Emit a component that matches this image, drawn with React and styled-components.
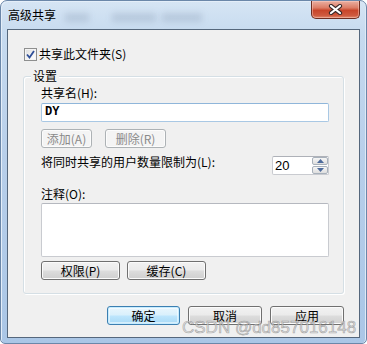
import styled, { createGlobalStyle } from "styled-components";

const Global = createGlobalStyle`
  html, body { margin: 0; padding: 0; background: #fff; }
  body {
    font-family: "Noto Sans CJK SC", "Noto Sans", sans-serif;
    font-size: 12px;
    color: #000;
  }
`;

const ui = `"Noto Sans CJK SC", "Noto Sans", sans-serif`;

const Window = styled.div`
  position: relative;
  width: 367px;
  height: 344px;
  box-sizing: border-box;
  display: flex;
  flex-direction: column;
  padding: 0 6px 5px 6px;
  border: 1px solid #6b87a9;
  border-radius: 7px 7px 5px 5px;
  background: linear-gradient(180deg, #d6e5f4 0%, #c6daef 10%, #b8cfea 45%, #aac6e6 100%);
  box-shadow: inset 1px 1px 0 #e4eef9, inset -1px 0 0 #dfeaf6;
  overflow: hidden;
`;

const TitleBar = styled.div`
  position: relative;
  height: 28px;
  display: flex;
  align-items: flex-start;
  margin: 0 -2px 0 0;
`;

const Blur = styled.span`
  position: absolute;
  top: 12px;
  left: ${(p) => p.$x}px;
  width: ${(p) => p.$w}px;
  height: 9px;
  background: rgba(70, 90, 120, 0.16);
  filter: blur(3px);
`;

const Title = styled.div`
  position: relative;
  padding: 7px 0 0 1px;
  font: 12px/14px ${ui};
  color: #000;
`;

const CloseButton = styled.div`
  margin-left: auto;
  margin-right: 2px;
  width: 49px;
  height: 18px;
  box-sizing: border-box;
  display: flex;
  align-items: center;
  justify-content: center;
  border: 1px solid #6e2e22;
  border-top: none;
  border-radius: 0 0 5px 5px;
  background: linear-gradient(180deg, #eab0a2 0%, #dc7d66 40%, #c8452a 55%, #cf5a3f 85%, #e08a6e 100%);
  box-shadow: inset 0 0 0 1px rgba(255, 210, 200, 0.45);
`;

const Client = styled.div`
  flex: 1;
  display: flex;
  flex-direction: column;
  background: #f0f0f0;
  border: 1px solid #55677c;
  padding: 17px 15px 0 15px;
`;

const CheckRow = styled.label`
  display: flex;
  align-items: center;
  gap: 2px;
  height: 14px;
  margin-left: 1px;
  font: 12px/14px ${ui};
`;

const CheckBox = styled.span`
  width: 13px;
  height: 13px;
  box-sizing: border-box;
  border: 1px solid #8e8f8f;
  background: linear-gradient(135deg, #dcdcdc 0%, #f4f4f4 60%, #ffffff 100%);
  box-shadow: inset 0 0 0 1px #f4f4f4;
  display: flex;
  align-items: center;
  justify-content: center;
`;

const Group = styled.div`
  position: relative;
  margin-top: 15px;
  border: 1px solid #d5dfe5;
  border-radius: 3px;
  box-shadow: inset 1px 1px 0 #fff, 1px 1px 0 #fff;
  padding: 9px 14px 13px 17px;
  display: flex;
  flex-direction: column;
`;

const GroupTitle = styled.span`
  position: absolute;
  top: -8px;
  left: 7px;
  padding: 0 2px;
  background: #f0f0f0;
  font: 12px/14px ${ui};
`;

const Label = styled.div`
  font: 12px/14px ${ui};
  margin-top: ${(p) => p.$mt || 0}px;
`;

const TextBox = styled.div`
  box-sizing: border-box;
  height: ${(p) => p.$h || 19}px;
  margin-top: ${(p) => p.$mt || 0}px;
  background: #fff;
  border: 1px solid ${(p) => (p.$focus ? "#a9c8e4" : "#c9cbd0")};
  border-top-color: ${(p) => (p.$focus ? "#8fb6da" : "#b5b8bf")};
  border-radius: 2px;
  padding: 1px 3px;
  font: bold 12px/15px "Liberation Mono", monospace;
`;

const ButtonRow = styled.div`
  display: flex;
  gap: ${(p) => p.$gap}px;
  margin-top: ${(p) => p.$mt || 0}px;
  justify-content: ${(p) => (p.$end ? "flex-end" : "flex-start")};
`;

const Button = styled.button`
  box-sizing: border-box;
  width: ${(p) => p.$w}px;
  height: 19px;
  padding: 0;
  font: 12px/14px ${ui};
  color: #000;
  border: 1px solid #707070;
  border-radius: 3px;
  background: linear-gradient(180deg, #f2f2f2 0%, #ebebeb 48%, #dddddd 52%, #cfcfcf 100%);
  box-shadow: inset 0 0 0 1px #fbfbfb;

  &:disabled {
    color: #8a8a8a;
    border-color: #adb2b5;
    background: #f4f4f4;
    box-shadow: inset 0 0 0 1px #fcfcfc;
  }
`;

const DefaultButton = styled(Button)`
  border-color: #3c7fb1;
  background: linear-gradient(180deg, #eaf6fd 0%, #d9f0fc 48%, #bee6fd 52%, #a7d9f5 100%);
  box-shadow: inset 0 0 0 1px #c6ecff, inset 0 0 0 2px rgba(255, 255, 255, 0.5);
`;

const LimitRow = styled.div`
  display: flex;
  align-items: flex-start;
  justify-content: space-between;
  margin-top: 8px;
`;

const Spinner = styled.div`
  box-sizing: border-box;
  width: 57px;
  height: 19px;
  display: flex;
  background: #fff;
  border: 1px solid #c9cbd0;
  border-top-color: #aeb1b8;
  border-radius: 2px;
`;

const SpinValue = styled.div`
  flex: 1;
  padding: 1px 2px;
  font: 13px/15px "Liberation Sans", Arial, sans-serif;
`;

const SpinButtons = styled.div`
  width: 16px;
  display: flex;
  flex-direction: column;
  gap: 1px;
`;

const SpinButton = styled.div`
  flex: 1;
  box-sizing: border-box;
  border: 1px solid #a8b1bb;
  border-radius: 2px;
  background: linear-gradient(180deg, #f6f6f6, #dedede);
  display: flex;
  align-items: center;
  justify-content: center;
`;

const Watermark = styled.div`
  position: absolute;
  left: 181px;
  top: 317px;
  font: 17px/20px "Liberation Sans", Arial, sans-serif;
  color: rgba(215, 215, 215, 0.7);
  -webkit-text-stroke: 0.6px rgba(110, 110, 110, 0.55);
  white-space: nowrap;
  pointer-events: none;
`;

function Arrow({ up }) {
  return (
    <svg width="7" height="4" viewBox="0 0 7 4">
      <path d={up ? "M0 4 L3.5 0 L7 4 Z" : "M0 0 L3.5 4 L7 0 Z"} fill="#4d6b9c" />
    </svg>
  );
}

export default function App() {
  return (
    <>
      <Global />
      <Window>
        <TitleBar>
          <Blur $x={58} $w={24} />
          <Blur $x={105} $w={44} />
          <Blur $x={155} $w={40} />
          <Title>高级共享</Title>
          <CloseButton>
            <svg width="15" height="11" viewBox="0 0 15 11">
              <path d="M3 2 L12 9 M12 2 L3 9" stroke="#3a2a2a" strokeWidth="4.2" strokeLinecap="round" />
              <path d="M3 2 L12 9 M12 2 L3 9" stroke="#ffffff" strokeWidth="2.2" strokeLinecap="round" />
            </svg>
          </CloseButton>
        </TitleBar>
        <Client>
          <CheckRow>
            <CheckBox>
              <svg width="9" height="9" viewBox="0 0 9 9">
                <path d="M1 4.5 L3.5 7.5 L8 1" fill="none" stroke="#2f4f98" strokeWidth="1.8" />
              </svg>
            </CheckBox>
            共享此文件夹(S)
          </CheckRow>
          <Group>
            <GroupTitle>设置</GroupTitle>
            <Label>共享名(H):</Label>
            <TextBox $mt={3} $focus>DY</TextBox>
            <ButtonRow $gap={13} $mt={7}>
              <Button $w={51} disabled>添加(A)</Button>
              <Button $w={61} disabled>删除(R)</Button>
            </ButtonRow>
            <LimitRow>
              <Label $mt={-1}>将同时共享的用户数量限制为(L):</Label>
              <Spinner>
                <SpinValue>20</SpinValue>
                <SpinButtons>
                  <SpinButton><Arrow up /></SpinButton>
                  <SpinButton><Arrow /></SpinButton>
                </SpinButtons>
              </Spinner>
            </LimitRow>
            <Label $mt={12}>注释(O):</Label>
            <TextBox $mt={2} $h={54} />
            <ButtonRow $gap={7} $mt={4}>
              <Button $w={79}>权限(P)</Button>
              <Button $w={79}>缓存(C)</Button>
            </ButtonRow>
          </Group>
          <ButtonRow $gap={8} $mt={12} $end>
            <DefaultButton $w={73}>确定</DefaultButton>
            <Button $w={74}>取消</Button>
            <Button $w={74}>应用</Button>
          </ButtonRow>
        </Client>
        <Watermark>CSDN @dd857016148</Watermark>
      </Window>
    </>
  );
}
